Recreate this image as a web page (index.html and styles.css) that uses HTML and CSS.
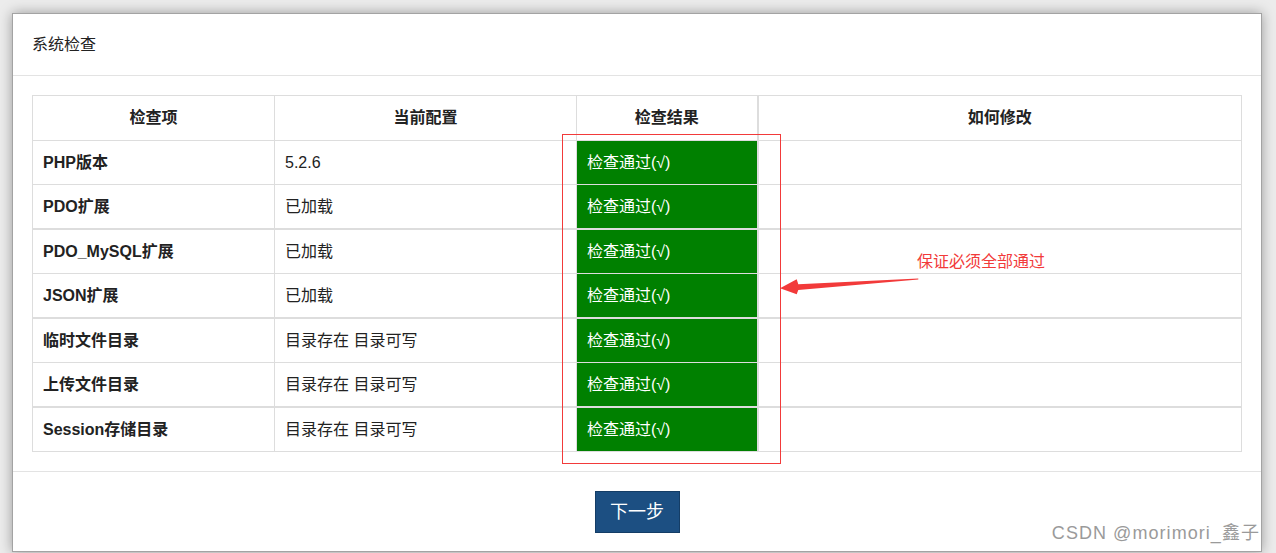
FILE: index.html
```html
<!DOCTYPE html>
<html lang="zh-CN">
<head>
<meta charset="utf-8">
<title>系统检查</title>
<link rel="stylesheet" href="styles.css">
</head>
<body>
<div class="panel">
  <div class="panel-heading">系统检查</div>
  <div class="panel-body">
    <table class="check-table">
      <colgroup>
        <col class="c1"><col class="c2"><col class="c3"><col class="c4">
      </colgroup>
      <thead>
        <tr><th>检查项</th><th>当前配置</th><th>检查结果</th><th class="fix">如何修改</th></tr>
      </thead>
      <tbody>
        <tr><td class="name">PHP版本</td><td>5.2.6</td><td class="ok">检查通过(√)</td><td class="fix"></td></tr>
        <tr><td class="name">PDO扩展</td><td>已加载</td><td class="ok">检查通过(√)</td><td class="fix"></td></tr>
      </tbody>
      <tbody>
        <tr><td class="name">PDO_MySQL扩展</td><td>已加载</td><td class="ok">检查通过(√)</td><td class="fix"></td></tr>
        <tr><td class="name">JSON扩展</td><td>已加载</td><td class="ok">检查通过(√)</td><td class="fix"></td></tr>
      </tbody>
      <tbody>
        <tr><td class="name">临时文件目录</td><td>目录存在 目录可写</td><td class="ok">检查通过(√)</td><td class="fix"></td></tr>
        <tr><td class="name">上传文件目录</td><td>目录存在 目录可写</td><td class="ok">检查通过(√)</td><td class="fix"></td></tr>
      </tbody>
      <tbody>
        <tr><td class="name">Session存储目录</td><td>目录存在 目录可写</td><td class="ok">检查通过(√)</td><td class="fix"></td></tr>
      </tbody>
    </table>
  </div>
  <div class="panel-footer">
    <a class="btn-next">下一步</a>
  </div>
</div>

<svg class="annot" width="1276" height="553" viewBox="0 0 1276 553">
  <rect x="562.5" y="134.5" width="218" height="329" fill="none" stroke="#f23a3a" stroke-width="1"/>
  <polygon points="780,288.3 796.7,279.3 798.3,284.3 918.3,278.6 918.3,279.4 798.3,290 796.7,294.3" fill="#f23a3a"/>
</svg>
<span class="annot-text">保证必须全部通过</span>
<span class="watermark">CSDN @morimori_鑫子</span>
</body>
</html>
```

FILE: styles.css
```css
html, body {
  margin: 0;
  padding: 0;
}
body {
  background: #ececec;
  font-family: "Liberation Sans", "Noto Sans CJK SC", sans-serif;
  color: #222;
  height: 553px;
  overflow: hidden;
  position: relative;
}
.panel {
  margin: 13px 14px 0 12px;
  background: #fff;
  border: 1px solid #a3a3a3;
  box-shadow: 0 0 12px rgba(0, 0, 0, 0.35);
}
.panel-heading {
  padding: 20px 19px 19px;
  font-size: 16px;
  line-height: 22px;
  border-bottom: 1px solid #e3e3e3;
}
.panel-body {
  padding: 19px 19px 19px;
}
.check-table {
  width: 1209px;
  table-layout: fixed;
  border-collapse: collapse;
  font-size: 16px;
}
.c1 { width: 242px; }
.c2 { width: 302px; }
.c3 { width: 181px; }
.c4 { width: 484px; }
.check-table th,
.check-table td {
  border: 1px solid #dddddd;
  padding: 10px 10px;
  line-height: 23px;
  text-align: left;
  vertical-align: middle;
}
.check-table th {
  text-align: center;
  font-weight: bold;
  line-height: 24px;
}
.check-table tbody + tbody {
  border-top: 2px solid #dddddd;
}
.check-table .fix {
  border-left: 2px solid #dddddd;
}
.check-table td.name {
  font-weight: bold;
}
.check-table td.ok {
  background: #008000;
  color: #fff;
}
.panel-footer {
  border-top: 1px solid #e3e3e3;
  padding: 19px 0 18px;
  text-align: center;
}
.btn-next {
  display: inline-block;
  box-sizing: border-box;
  width: 85px;
  height: 42px;
  line-height: 40px;
  background: #1c4f82;
  border: 1px solid #143d66;
  color: #fff;
  font-size: 18px;
  text-align: center;
  vertical-align: top;
}
.annot {
  position: absolute;
  left: 0;
  top: 0;
  pointer-events: none;
}
.annot-text {
  position: absolute;
  left: 917px;
  top: 252px;
  font-size: 16px;
  line-height: 20px;
  color: #f23a3a;
  white-space: nowrap;
}
.watermark {
  position: absolute;
  right: 16px;
  top: 523px;
  font-size: 18px;
  line-height: 20px;
  letter-spacing: 1.05px;
  color: #9a9a9a;
  white-space: nowrap;
}
```
